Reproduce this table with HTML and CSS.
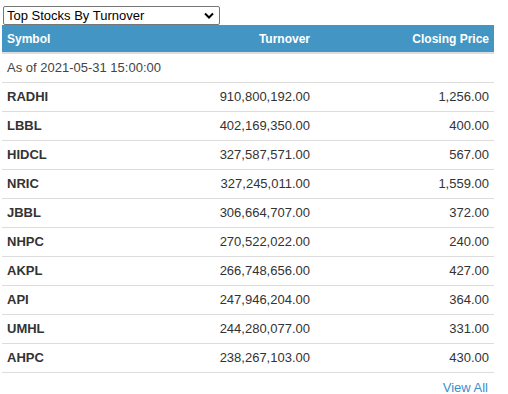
FILE: index.html
```html
<!DOCTYPE html>
<html>
<head>
<meta charset="utf-8">
<link rel="stylesheet" href="styles.css">
</head>
<body>
<div class="widget">
  <div class="picker">
    <select class="picker-select">
      <option>Top Stocks By Turnover</option>
    </select>
    <svg class="picker-arrow" width="10" height="7" viewBox="0 0 10 7"><path d="M1 1.5 L5 5.5 L9 1.5" fill="none" stroke="#000" stroke-width="2"/></svg>
  </div>
  <table class="stocks">
    <colgroup>
      <col class="c-sym"><col class="c-turn"><col class="c-close">
    </colgroup>
    <thead>
      <tr><th class="left">Symbol</th><th>Turnover</th><th>Closing Price</th></tr>
    </thead>
    <tbody>
      <tr class="asof"><td colspan="3">As of 2021-05-31 15:00:00</td></tr>
      <tr><td class="sym">RADHI</td><td>910,800,192.00</td><td>1,256.00</td></tr>
      <tr><td class="sym">LBBL</td><td>402,169,350.00</td><td>400.00</td></tr>
      <tr><td class="sym">HIDCL</td><td>327,587,571.00</td><td>567.00</td></tr>
      <tr><td class="sym">NRIC</td><td>327,245,011.00</td><td>1,559.00</td></tr>
      <tr><td class="sym">JBBL</td><td>306,664,707.00</td><td>372.00</td></tr>
      <tr><td class="sym">NHPC</td><td>270,522,022.00</td><td>240.00</td></tr>
      <tr><td class="sym">AKPL</td><td>266,748,656.00</td><td>427.00</td></tr>
      <tr><td class="sym">API</td><td>247,946,204.00</td><td>364.00</td></tr>
      <tr><td class="sym">UMHL</td><td>244,280,077.00</td><td>331.00</td></tr>
      <tr><td class="sym">AHPC</td><td>238,267,103.00</td><td>430.00</td></tr>
    </tbody>
  </table>
  <div class="more"><a href="#" class="more-link">View All</a></div>
</div>
</body>
</html>
```

FILE: styles.css
```css
html, body {
  margin: 0;
  padding: 0;
  background: #fff;
}
body {
  font-family: "Liberation Sans", Arial, sans-serif;
  font-size: 13px;
  color: #333;
}
.widget {
  width: 492px;
  padding: 6px 0 0 2px;
}
.picker {
  position: relative;
  width: 217px;
  height: 19px;
  margin-left: 1px;
}
.picker-select {
  appearance: none;
  -webkit-appearance: none;
  width: 217px;
  height: 19px;
  margin: 0;
  padding: 0 0 0 3px;
  border: 1px solid #767676;
  border-radius: 2px;
  background: #fff;
  font-family: "Liberation Sans", Arial, sans-serif;
  font-size: 13px;
  color: #000;
  line-height: 17px;
  display: block;
}
.picker-arrow {
  position: absolute;
  right: 6px;
  top: 6px;
  pointer-events: none;
}
.stocks {
  width: 492px;
  border-collapse: collapse;
  table-layout: fixed;
}
.c-sym { width: 150px; }
.c-turn { width: 163px; }
.c-close { width: 179px; }
.stocks th {
  background: #4396c3;
  color: #fff;
  font-size: 12px;
  font-weight: bold;
  text-align: right;
  padding: 4px 5px 3px;
  line-height: 20px;
  border-bottom: 2px solid #ddd;
}
.stocks th.left { text-align: left; }
.stocks td {
  padding: 4px 5px;
  line-height: 20px;
  text-align: right;
  border-bottom: 1px solid #ddd;
  white-space: nowrap;
}
.stocks td.sym {
  text-align: left;
  font-weight: bold;
}
.stocks tr.asof td {
  text-align: left;
  color: #444;
}
.more {
  text-align: right;
  padding: 7px 6px 0 0;
  line-height: 16px;
}
.more-link {
  color: #3a8fd0;
  text-decoration: none;
}
```
